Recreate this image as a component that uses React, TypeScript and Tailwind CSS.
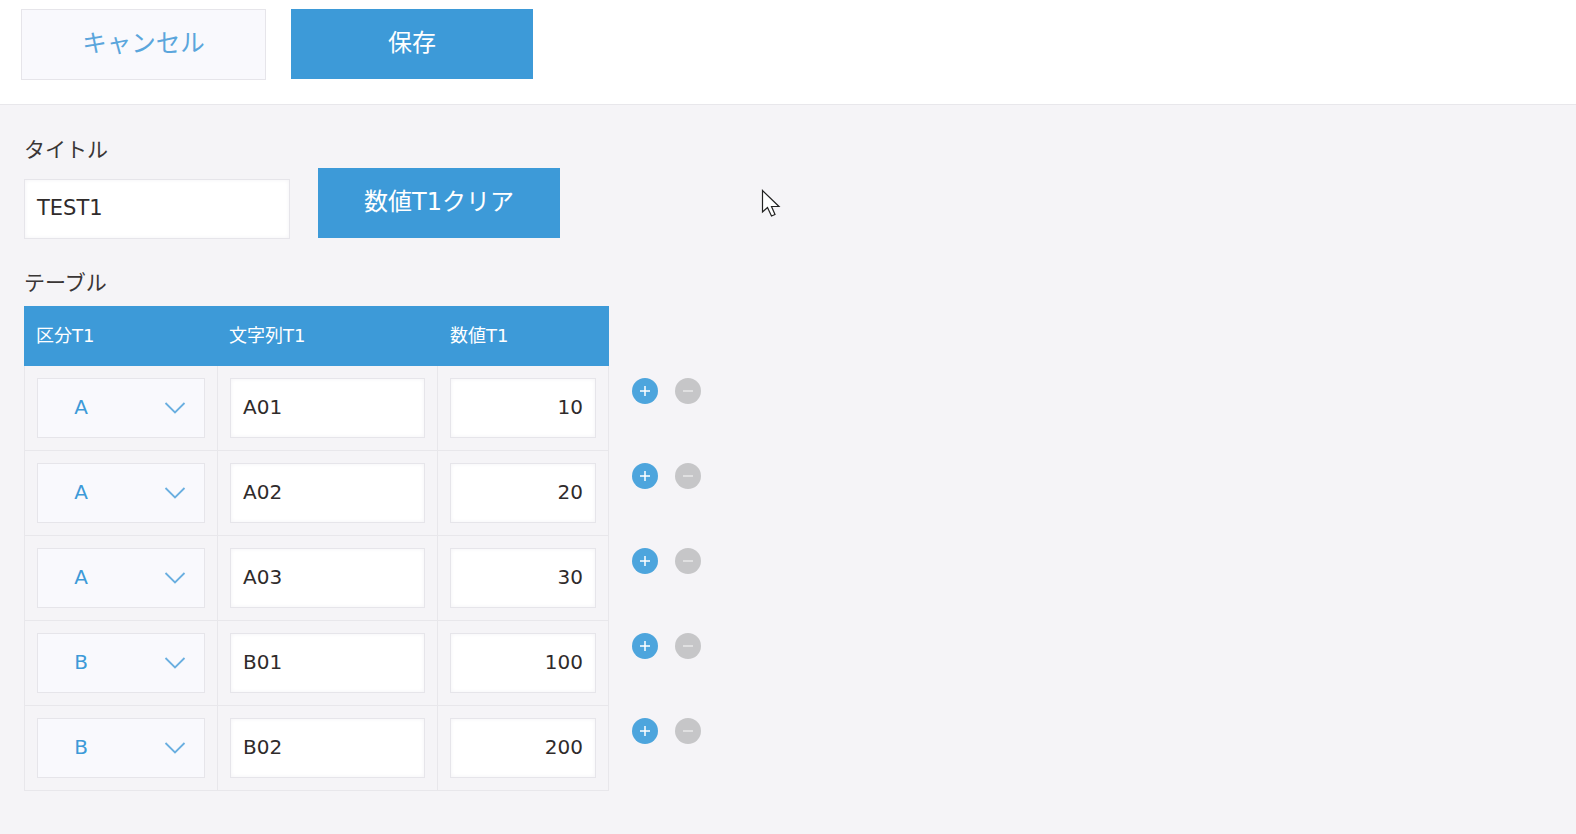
import React from 'react';

const font = { fontFamily: '"DejaVu Sans", "Noto Sans CJK JP", sans-serif' };

const rows = [
  { kind: 'A', code: 'A01', value: '10' },
  { kind: 'A', code: 'A02', value: '20' },
  { kind: 'A', code: 'A03', value: '30' },
  { kind: 'B', code: 'B01', value: '100' },
  { kind: 'B', code: 'B02', value: '200' },
];

const Row: React.FC<{ kind: string; code: string; value: string }> = ({ kind, code, value }) => (
  <div className="flex">
    <div className="flex w-[585px] h-[85px] border-x border-b border-[#e8e7eb]">
      <div className="w-[193px] shrink-0 border-r border-[#e8e7eb] pl-[12px] pt-[12px]">
        <div className="flex items-center w-[168px] h-[60px] pb-[2px] bg-[#f9f9fd] border border-[#e6e5ea] text-[#3d9ad8] text-[20px]">
          <span className="w-[86px] text-center">{kind}</span>
          <svg className="ml-[40px] mt-[2px]" width="22" height="14" viewBox="0 0 22 14" fill="none">
            <path d="M1.5 2 L11 11.5 L20.5 2" stroke="#6aafe0" strokeWidth="1.8" />
          </svg>
        </div>
      </div>
      <div className="w-[220px] shrink-0 border-r border-[#e8e7eb] pl-[12px] pt-[12px]">
        <div className="flex items-center w-[195px] h-[60px] pb-[2px] bg-white border border-[#e6e5ea] shadow-[inset_0_0_4px_#f3f2f5] pl-[12px] text-[#2f2b2b] text-[20px]">{code}</div>
      </div>
      <div className="flex-1 pl-[12px] pt-[12px]">
        <div className="flex items-center justify-end w-[146px] h-[60px] pb-[2px] bg-white border border-[#e6e5ea] shadow-[inset_0_0_4px_#f3f2f5] pr-[12px] text-[#2f2b2b] text-[20px]">{value}</div>
      </div>
    </div>
    <div className="flex items-start gap-[17px] pl-[23px] pt-[12px]">
      <button className="flex items-center justify-center w-[26px] h-[26px] rounded-full bg-[#4da5dd]">
        <svg width="12" height="12" viewBox="0 0 12 12"><path d="M6 1 V11 M1 6 H11" stroke="#fff" strokeWidth="1.5" /></svg>
      </button>
      <button className="flex items-center justify-center w-[26px] h-[26px] rounded-full bg-[#c6c6c8]">
        <svg width="12" height="12" viewBox="0 0 12 12"><path d="M1 6 H11" stroke="#e9e9ea" strokeWidth="1.5" /></svg>
      </button>
    </div>
  </div>
);

export default function App() {
  return (
    <div className="relative h-[834px] bg-[#f5f4f7] overflow-hidden" style={font}>
      <div className="flex items-start gap-[25px] h-[105px] bg-white border-b border-[#e8e7eb] pl-[21px] pt-[9px]">
        <button className="w-[245px] h-[71px] pb-[1px] bg-[#f9f9fd] border border-[#e6e5ea] text-[#5ba6dc] text-[24.5px]">キャンセル</button>
        <button className="w-[242px] h-[70px] pb-[2px] bg-[#3d9ad8] text-white text-[24px]">保存</button>
      </div>

      <div className="pl-[24px]">
        <div className="pt-[29px] h-[63px] text-[21px] leading-[32px] text-[#3a3636]">タイトル</div>
        <div className="flex items-start gap-[28px]">
          <div className="flex items-center w-[266px] h-[60px] mt-[11px] bg-white border border-[#e6e5ea] shadow-[inset_0_0_4px_#f3f2f5] pl-[12px] text-[21px] text-[#2f2b2b]">TEST1</div>
          <button className="w-[242px] h-[70px] pb-[2px] bg-[#3d9ad8] text-white text-[24px]">数値T1クリア</button>
        </div>
        <div className="pt-[27px] h-[67px] text-[21px] leading-[34px] text-[#3a3636]">テーブル</div>
        <div className="flex items-center w-[585px] h-[60px] pb-[2px] bg-[#3d9ad8] text-white text-[18px]">
          <span className="w-[193px] pl-[12px]">区分T1</span>
          <span className="w-[221px] pl-[12px]">文字列T1</span>
          <span className="pl-[12px]">数値T1</span>
        </div>
        {rows.map((r) => (
          <Row key={r.code} {...r} />
        ))}
      </div>

      <svg className="absolute left-[761px] top-[189px]" width="22" height="30" viewBox="0 0 22 30">
        <path d="M1.5 1.5 V23 L6.5 18.5 L10.5 27 L14 25.5 L10.5 17.5 L18 17.5 Z" fill="#fff" stroke="#222" strokeWidth="1.2" />
      </svg>
    </div>
  );
}
